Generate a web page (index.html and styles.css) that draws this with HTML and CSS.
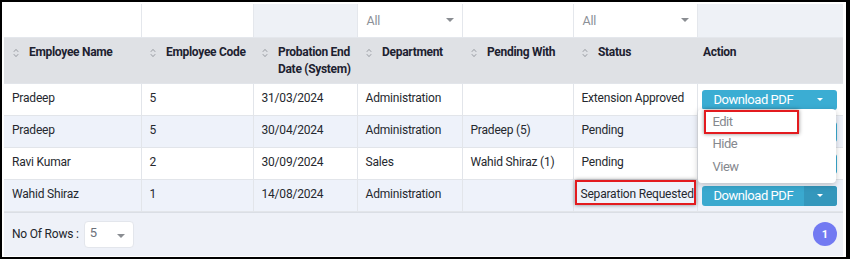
FILE: index.html
```html
<!DOCTYPE html>
<html>
<head>
<meta charset="utf-8">
<link rel="stylesheet" href="styles.css">
</head>
<body>
<div class="frame">
  <div class="panel">
    <table class="grid">
      <colgroup>
        <col class="c1"><col class="c2"><col class="c3"><col class="c4"><col class="c5"><col class="c6"><col class="c7">
      </colgroup>
      <thead>
        <tr class="filters">
          <td></td>
          <td></td>
          <td class="nofilter"></td>
          <td><div class="fsel"><span>All</span><i class="caret"></i></div></td>
          <td></td>
          <td><div class="fsel"><span>All</span><i class="caret"></i></div></td>
          <td class="nofilter"></td>
        </tr>
        <tr class="heads">
          <th><div class="hcell"><svg class="sort" viewBox="0 0 6 10"><path d="M0.8 3.8 L3 1.4 L5.2 3.8 M0.8 6.2 L3 8.6 L5.2 6.2"/></svg><span>Employee Name</span></div></th>
          <th><div class="hcell"><svg class="sort" viewBox="0 0 6 10"><path d="M0.8 3.8 L3 1.4 L5.2 3.8 M0.8 6.2 L3 8.6 L5.2 6.2"/></svg><span>Employee Code</span></div></th>
          <th><div class="hcell"><svg class="sort" viewBox="0 0 6 10"><path d="M0.8 3.8 L3 1.4 L5.2 3.8 M0.8 6.2 L3 8.6 L5.2 6.2"/></svg><span>Probation End<br>Date (System)</span></div></th>
          <th><div class="hcell"><svg class="sort" viewBox="0 0 6 10"><path d="M0.8 3.8 L3 1.4 L5.2 3.8 M0.8 6.2 L3 8.6 L5.2 6.2"/></svg><span>Department</span></div></th>
          <th><div class="hcell"><svg class="sort" viewBox="0 0 6 10"><path d="M0.8 3.8 L3 1.4 L5.2 3.8 M0.8 6.2 L3 8.6 L5.2 6.2"/></svg><span>Pending With</span></div></th>
          <th><div class="hcell"><svg class="sort" viewBox="0 0 6 10"><path d="M0.8 3.8 L3 1.4 L5.2 3.8 M0.8 6.2 L3 8.6 L5.2 6.2"/></svg><span>Status</span></div></th>
          <th class="act"><span>Action</span></th>
        </tr>
      </thead>
      <tbody>
        <tr>
          <td>Pradeep</td><td>5</td><td>31/03/2024</td><td>Administration</td><td></td><td>Extension Approved</td>
          <td class="actcell">
            <div class="btngroup">
              <div class="btn"><span class="btnlabel">Download PDF</span><span class="btncaret"><i></i></span></div>
              <div class="menu">
                <div class="mitem">Edit<span class="annot annot-edit"></span></div>
                <div class="mitem">Hide</div>
                <div class="mitem">View</div>
              </div>
            </div>
          </td>
        </tr>
        <tr class="alt">
          <td>Pradeep</td><td>5</td><td>30/04/2024</td><td>Administration</td><td>Pradeep (5)</td><td>Pending</td>
          <td class="actcell"><div class="btngroup"><div class="btn"><span class="btnlabel">Download PDF</span><span class="btncaret"><i></i></span></div></div></td>
        </tr>
        <tr>
          <td>Ravi Kumar</td><td>2</td><td>30/09/2024</td><td>Sales</td><td>Wahid Shiraz (1)</td><td>Pending</td>
          <td class="actcell"><div class="btngroup"><div class="btn"><span class="btnlabel">Download PDF</span><span class="btncaret"><i></i></span></div></div></td>
        </tr>
        <tr class="alt">
          <td>Wahid Shiraz</td><td>1</td><td>14/08/2024</td><td>Administration</td><td></td><td class="marked">Separation Requested<span class="annot annot-status"></span></td>
          <td class="actcell"><div class="btngroup"><div class="btn split"><span class="btnlabel">Download PDF</span><span class="btncaret"><i></i></span></div></div></td>
        </tr>
      </tbody>
    </table>
    <div class="footer">
      <span class="rowslabel">No Of Rows :</span>
      <div class="rowsel"><span>5</span><i class="caret"></i></div>
      <div class="pager"><span class="page">1</span></div>
    </div>
  </div>
</div>
</body>
</html>
```
FILE: styles.css
```css
* { box-sizing: border-box; }
html, body { margin: 0; padding: 0; background: #fff; }
body { font-family: Roboto, "Liberation Sans", sans-serif; color: #212529; }

.frame {
  width: 850px;
  height: 259px;
  border-style: solid;
  border-color: #000;
  border-width: 2px 4px 2px 2px;
  padding: 2px 3px 3px 2px;
  background: #fff;
  overflow: hidden;
}
.panel { width: 839px; }

.grid {
  width: 839px;
  table-layout: fixed;
  border-collapse: collapse;
  font-size: 12px;
  letter-spacing: -0.2px;
}
.c1 { width: 137px; } .c2 { width: 112px; } .c3 { width: 104px; } .c4 { width: 105px; }
.c5 { width: 111px; } .c6 { width: 124px; } .c7 { width: 146px; }

.filters td {
  height: 33px;
  padding: 0;
  background: #fff;
  border: 1px solid #e4e7ec;
  border-top: none;
}
.filters td:first-child { border-left: none; }
.filters td:last-child { border-right: none; }
.filters td.nofilter { background: #eef1f6; }
.fsel {
  display: flex;
  align-items: center;
  justify-content: space-between;
  height: 32px;
  padding: 0 8px 0 9px;
  color: #8c9097;
  font-size: 12.5px;
}
.caret {
  display: block;
  width: 0; height: 0;
  border-left: 4.5px solid transparent;
  border-right: 4.5px solid transparent;
  border-top: 4.5px solid #8a8d92;
}

.heads th {
  background: #dfe1e5;
  height: 44px;
  padding: 6px 4px 5px 9px;
  vertical-align: top;
  text-align: left;
  font-weight: 700;
  line-height: 17px;
  color: #1d2130;
  white-space: nowrap;
  letter-spacing: -0.3px;
}
.heads th.act { padding-left: 6px; }
.hcell { display: flex; align-items: flex-start; }
.sort {
  width: 6px; height: 10px;
  margin: 4px 10px 0 0;
  flex: none;
  fill: none;
  stroke: #8e929a;
  stroke-width: 0.9;
}

tbody td {
  height: 32px;
  padding: 6px 8px 5px 8px;
  vertical-align: top;
  line-height: 17px;
  border: 1px solid #e2e5ea;
  color: #25282e;
  background: #fff;
  white-space: nowrap;
}
tbody td:first-child { border-left: none; }
tbody td:last-child { border-right: none; }
tbody tr.alt td { background: #eef2fa; }
tbody td.actcell { padding: 6px 6px 5px 4px; }
tbody td.marked { position: relative; padding-left: 7px; }

.btngroup { position: relative; width: 135px; }
.btn {
  display: flex;
  height: 20px;
  border-radius: 3px;
  background: #3badd3;
  color: #fff;
  font-size: 13px;
  letter-spacing: -0.45px;
  line-height: 20px;
  overflow: hidden;
}
.btnlabel { flex: 1; padding-left: 12px; }
.btncaret { width: 33px; display: flex; align-items: center; justify-content: center; }
.btncaret i {
  display: block; width: 0; height: 0;
  border-left: 3.5px solid transparent;
  border-right: 3.5px solid transparent;
  border-top: 3.5px solid #fff;
}
.btn.split { background: #3aa9cf; }
.btn.split .btncaret { background: #3497bc; }

.menu {
  position: absolute;
  left: -4px;
  top: 19px;
  width: 138px;
  height: 74px;
  padding-top: 2px;
  background: #fff;
  border-radius: 4px;
  box-shadow: 0 2px 6px rgba(0,0,0,0.22);
  z-index: 5;
}
.mitem {
  position: relative;
  height: 22.5px;
  line-height: 22.5px;
  padding-left: 15px;
  font-size: 13px;
  letter-spacing: -0.5px;
  color: #85888e;
}

.annot {
  position: absolute;
  border: 2px solid #e31b1f;
  box-shadow: 0 0 4px rgba(0,0,0,0.45);
  pointer-events: none;
}
.annot-edit { left: 6px; top: -1px; width: 95px; height: 24px; }
.annot-status { left: 1px; top: 0px; width: 121px; height: 25px; }

.footer {
  display: flex;
  align-items: center;
  height: 44px;
  padding: 0 6px 0 8px;
  background: #eef1f8;
  border-top: 1px solid #dadee5;
}
.rowslabel { font-size: 12px; letter-spacing: -0.2px; color: #22252b; }
.rowsel {
  display: flex;
  align-items: center;
  justify-content: space-between;
  margin-left: 5px;
  width: 50px;
  height: 27px;
  padding: 0 8px 0 5px;
  background: #fff;
  border: 1px solid #e3e6ec;
  border-radius: 4px;
  color: #6c7079;
  font-size: 13px;
}
.rowsel span { margin-top: -4px; }
.rowsel .caret { margin-top: 4px; }
.pager { margin-left: auto; }
.page {
  display: flex;
  align-items: center;
  justify-content: center;
  width: 24px; height: 24px;
  border-radius: 50%;
  background: #727af2;
  color: #fff;
  font-size: 11px;
  font-weight: 700;
}
```
